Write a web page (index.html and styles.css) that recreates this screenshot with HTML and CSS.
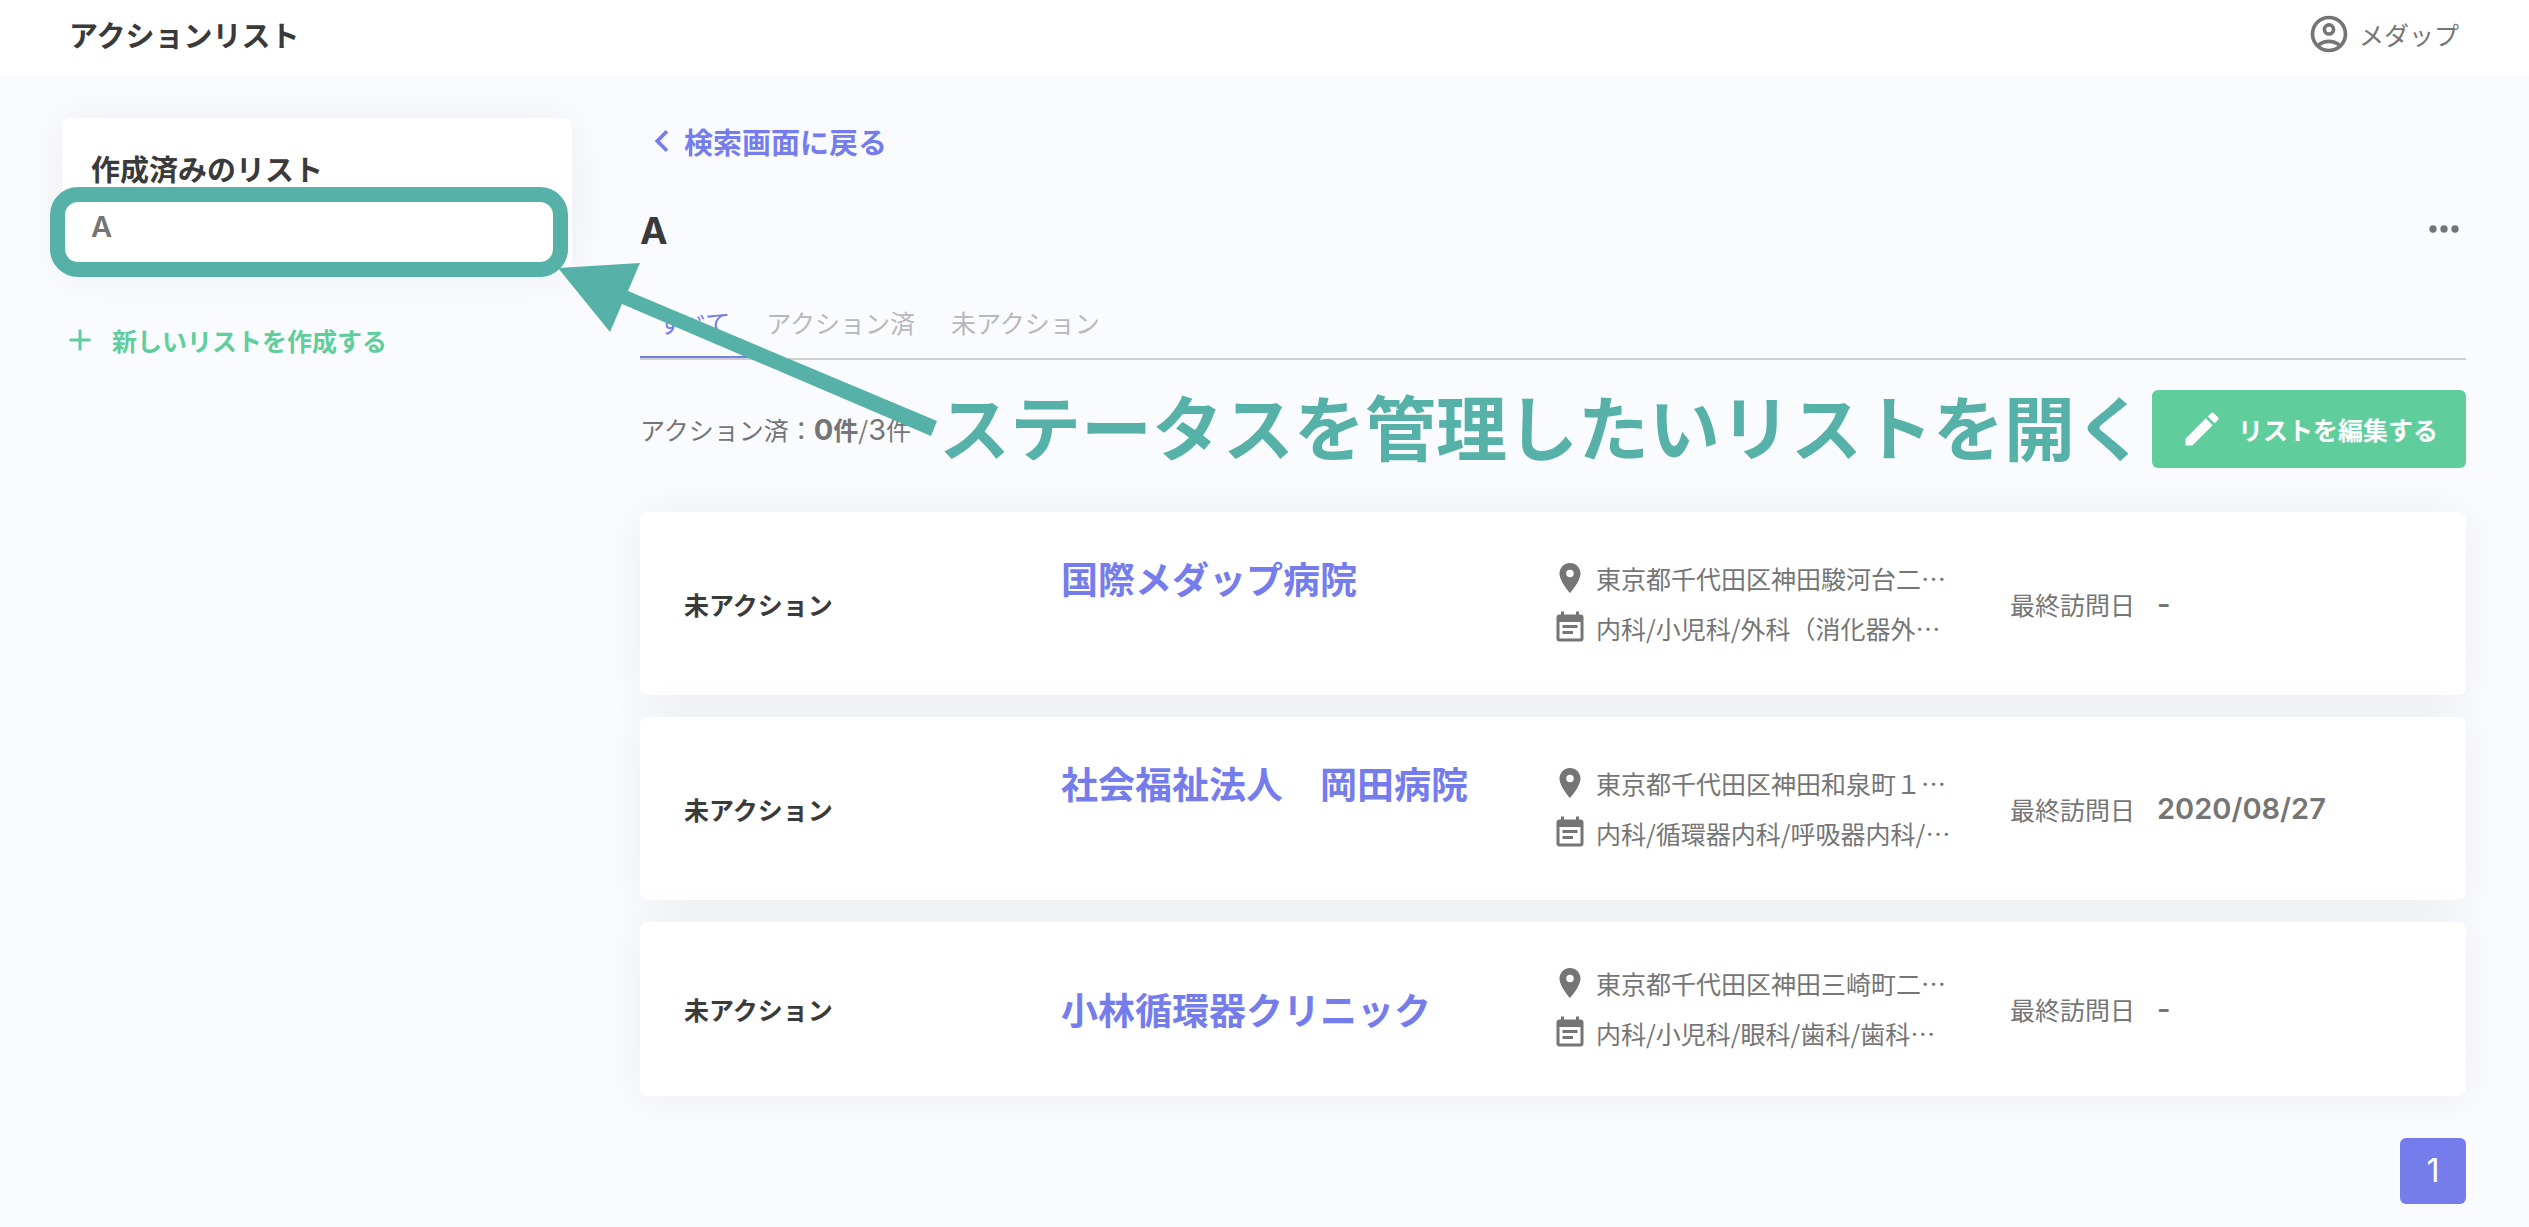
FILE: index.html
```
<!DOCTYPE html>
<html lang="ja">
<head>
  <meta charset="UTF-8">
  <meta name="viewport" content="width=device-width, initial-scale=1.0">
  <title>アクションリスト</title>
  <link rel="stylesheet" href="styles.css">
</head>
<body>

  <header class="header">
    <h1>アクションリスト</h1>
    <a href="#" class="account">
      <svg class="icon-lg" viewBox="0 0 24 24"><path fill-rule="evenodd" d="M12 2a10 10 0 1 0 0 20 10 10 0 0 0 0-20zM7.350 18.500C8.660 17.560 10.260 17 12 17s3.340.56 4.650 1.500A7.960 7.960 0 0 1 12 20c-1.740 0-3.340-.56-4.650-1.500zm10.790-1.380A9.950 9.950 0 0 0 12 15c-2.320 0-4.450.79-6.140 2.120A7.960 7.960 0 0 1 4 12c0-4.420 3.580-8 8-8s8 3.580 8 8c0 1.950-.7 3.730-1.860 5.120zM12 6a3.500 3.500 0 1 0 0 7 3.500 3.500 0 0 0 0-7zm0 5a1.500 1.500 0 1 1 0-3 1.500 1.500 0 0 1 0 3z"/></svg>
      <span>メダップ</span>
    </a>
  </header>

  <div class="page">
    <aside class="sidebar">
      <div class="list-box">
        <h2>作成済みのリスト</h2>
        <a href="#" class="list-item">A<span class="highlight"></span></a>
      </div>
      <a href="#" class="new-list">
        <svg class="icon" viewBox="0 0 24 24"><path d="M19 13h-6v6h-2v-6H5v-2h6V5h2v6h6v2z"/></svg>
        <span>新しいリストを作成する</span>
      </a>
    </aside>

    <main class="main">
      <a href="#" class="back">
        <svg class="icon-lg" viewBox="0 0 24 24"><path d="M15.410 7.410L14 6l-6 6 6 6 1.410-1.410L10.830 12z"/></svg>
        <span>検索画面に戻る</span>
      </a>

      <div class="title-row">
        <h2>A</h2>
        <button class="more" aria-label="メニュー">
          <svg class="icon-lg" viewBox="0 0 24 24"><path d="M6 10a2 2 0 1 0 0 4 2 2 0 0 0 0-4zm6 0a2 2 0 1 0 0 4 2 2 0 0 0 0-4zm6 0a2 2 0 1 0 0 4 2 2 0 0 0 0-4z"/></svg>
        </button>
      </div>

      <nav class="tabs">
        <a href="#" class="tab active">すべて</a>
        <a href="#" class="tab">アクション済</a>
        <a href="#" class="tab">未アクション</a>
      </nav>

      <div class="toolbar">
        <p class="count">アクション済：<b><span class="num">0</span>件</b>/<span class="num">3</span>件</p>
        <button class="edit">
          <svg class="icon-lg" viewBox="0 0 24 24"><path d="M3 17.250V21h3.750L17.810 9.940l-3.750-3.750L3 17.250zM20.710 7.040a1 1 0 0 0 0-1.410l-2.340-2.340a1 1 0 0 0-1.410 0l-1.830 1.830 3.750 3.750 1.830-1.830z"/></svg>
          <span>リストを編集する</span>
        </button>
        <div class="note">ステータスを管理したいリストを開く</div>
      </div>

      <div class="cards">
        <section class="card">
          <p class="status">未アクション</p>
          <a href="#" class="name name-tall">国際メダップ病院</a>
          <div class="details">
            <p><svg class="icon" viewBox="0 0 24 24"><path fill-rule="evenodd" d="M12 2C8.130 2 5 5.130 5 9c0 5.250 7 13 7 13s7-7.750 7-13c0-3.870-3.130-7-7-7zm0 9.500a2.500 2.500 0 1 1 0-5 2.500 2.500 0 0 1 0 5z"/></svg>東京都千代田区神田駿河台二…</p>
            <p><svg class="icon" viewBox="0 0 24 24"><path fill-rule="evenodd" d="M17 10H7v2h10v-2zm2-7h-1V1h-2v2H8V1H6v2H5a2 2 0 0 0-2 2v14a2 2 0 0 0 2 2h14a2 2 0 0 0 2-2V5a2 2 0 0 0-2-2zm0 16H5V8h14v11zm-5-5H7v2h7v-2z"/></svg>内科/小児科/外科（消化器外…</p>
          </div>
          <p class="visit">最終訪問日<b class="num">-</b></p>
        </section>

        <section class="card">
          <p class="status">未アクション</p>
          <a href="#" class="name name-tall">社会福祉法人　岡田病院</a>
          <div class="details">
            <p><svg class="icon" viewBox="0 0 24 24"><path fill-rule="evenodd" d="M12 2C8.130 2 5 5.130 5 9c0 5.250 7 13 7 13s7-7.750 7-13c0-3.870-3.130-7-7-7zm0 9.500a2.500 2.500 0 1 1 0-5 2.500 2.500 0 0 1 0 5z"/></svg>東京都千代田区神田和泉町１…</p>
            <p><svg class="icon" viewBox="0 0 24 24"><path fill-rule="evenodd" d="M17 10H7v2h10v-2zm2-7h-1V1h-2v2H8V1H6v2H5a2 2 0 0 0-2 2v14a2 2 0 0 0 2 2h14a2 2 0 0 0 2-2V5a2 2 0 0 0-2-2zm0 16H5V8h14v11zm-5-5H7v2h7v-2z"/></svg>内科/循環器内科/呼吸器内科/…</p>
          </div>
          <p class="visit">最終訪問日<b class="num">2020/08/27</b></p>
        </section>

        <section class="card">
          <p class="status">未アクション</p>
          <a href="#" class="name">小林循環器クリニック</a>
          <div class="details">
            <p><svg class="icon" viewBox="0 0 24 24"><path fill-rule="evenodd" d="M12 2C8.130 2 5 5.130 5 9c0 5.250 7 13 7 13s7-7.750 7-13c0-3.870-3.130-7-7-7zm0 9.500a2.500 2.500 0 1 1 0-5 2.500 2.500 0 0 1 0 5z"/></svg>東京都千代田区神田三崎町二…</p>
            <p><svg class="icon" viewBox="0 0 24 24"><path fill-rule="evenodd" d="M17 10H7v2h10v-2zm2-7h-1V1h-2v2H8V1H6v2H5a2 2 0 0 0-2 2v14a2 2 0 0 0 2 2h14a2 2 0 0 0 2-2V5a2 2 0 0 0-2-2zm0 16H5V8h14v11zm-5-5H7v2h7v-2z"/></svg>内科/小児科/眼科/歯科/歯科…</p>
          </div>
          <p class="visit">最終訪問日<b class="num">-</b></p>
        </section>
      </div>

      <nav class="pager">
        <a href="#">1</a>
      </nav>

      <!-- arrow from the note to the highlighted list -->
      <svg class="arrow" viewBox="0 0 379 174"><path d="M0 5L82 0 70 28 379 158 373 173 64 41 52 69z"/></svg>
    </main>
  </div>

</body>
</html>
```

FILE: styles.css
```
* {
  box-sizing: border-box;
}
body {
  margin: 0;
  background-color: #fafbff;
  color: #757575;
  font-family: "Noto Sans CJK JP", sans-serif;
  font-size: 25px;
  line-height: 40px;
}
h1, h2, p {
  margin: 0;
}
h1, h2 {
  color: #3a3a3a;
  font-size: 29px;
  font-weight: bold;
}
a {
  color: inherit;
  text-decoration: none;
}
button {
  padding: 0;
  border: none;
  background: none;
  color: inherit;
  font: inherit;
  cursor: pointer;
}
svg {
  display: block;
  flex: none;
  fill: currentColor;
}
.icon {
  width: 36px;
  height: 36px;
}
.icon-lg {
  width: 44px;
  height: 44px;
}
.num {
  font-family: Inter, sans-serif;
  font-size: 29px;
}
.header {
  position: relative;
  z-index: 1;
  display: flex;
  align-items: center;
  justify-content: space-between;
  height: 76px;
  padding: 0 70px 8px 69px;
  background-color: white;
}
.account {
  display: flex;
  align-items: flex-end;
  gap: 8px;
}
.account span {
  line-height: 44px;
}
.page {
  display: flex;
  gap: 68px;
  padding: 42px 63px 23px 62px;
}
.sidebar {
  flex: none;
  width: 510px;
}
.list-box {
  padding: 30px 0 26px;
  border-radius: 8px;
  background-color: white;
  box-shadow: 0 2px 50px rgba(0, 0, 0, 0.06);
}
.list-box h2 {
  padding: 0 29px;
}
.list-item {
  position: relative;
  display: block;
  margin-top: 19px;
  padding: 0 29px;
  font-family: Inter, sans-serif;
  font-size: 29px;
  font-weight: 600;
}
.highlight {
  position: absolute;
  top: -20px;
  right: 4px;
  left: -12px;
  height: 90px;
  border: 15px solid #56b2a8;
  border-radius: 28px;
}
.new-list {
  display: flex;
  align-items: center;
  gap: 14px;
  margin-top: 47px;
  color: #5fce9c;
  font-weight: bold;
}
.main {
  position: relative;
  flex: 1;
  min-width: 0;
}
.back {
  display: flex;
  align-items: center;
  height: 46px;
  color: #757ded;
  font-size: 29px;
  font-weight: bold;
}
.title-row {
  display: flex;
  align-items: flex-end;
  justify-content: space-between;
  height: 44px;
  margin-top: 43px;
}
.title-row h2 {
  font-family: Inter, sans-serif;
  font-size: 37px;
}
.tabs {
  display: flex;
  margin-top: 37px;
  border-bottom: 2px solid #cfcfd2;
}
.tab {
  padding: 0 18px;
  border-bottom: 2px solid transparent;
  color: #b8b8ba;
  line-height: 68px;
}
.tab.active {
  border-color: #757ded;
  color: #757ded;
}
.toolbar {
  position: relative;
  display: flex;
  align-items: center;
  justify-content: space-between;
  margin-top: 30px;
}
.edit {
  display: flex;
  align-items: center;
  gap: 14px;
  height: 78px;
  padding: 0 28px;
  border-radius: 6px;
  background-color: #5fce9c;
  color: white;
  font-weight: bold;
}
.note {
  position: absolute;
  top: -5px;
  left: 299px;
  color: #56b2a8;
  font-size: 71px;
  font-weight: bold;
  line-height: 78px;
  white-space: nowrap;
}
.arrow {
  position: absolute;
  top: 145px;
  left: -82px;
  width: 379px;
  height: 174px;
  fill: #56b2a8;
}
.cards {
  display: grid;
  gap: 22px;
  margin-top: 44px;
}
.card {
  display: grid;
  grid-template-columns: 377fr 491fr 458fr 412fr;
  align-items: center;
  padding: 36px 44px;
  border-radius: 8px;
  background-color: white;
  box-shadow: 0 2px 50px rgba(0, 0, 0, 0.06);
  white-space: nowrap;
}
.status {
  color: #3a3a3a;
  font-weight: bold;
}
.name {
  color: #757ded;
  font-size: 37px;
  font-weight: bold;
  line-height: 60px;
}
.name-tall {
  height: 111px;
}
.details {
  padding-bottom: 2px;
}
.details p {
  display: flex;
  align-items: center;
  gap: 8px;
  height: 50px;
}
.visit {
  display: flex;
  align-items: center;
  gap: 22px;
}
.visit .num {
  font-weight: 600;
}
.pager {
  display: flex;
  justify-content: flex-end;
  margin-top: 42px;
}
.pager a {
  width: 66px;
  border-radius: 6px;
  background-color: #757ded;
  color: white;
  font-family: Inter, sans-serif;
  font-size: 32px;
  line-height: 66px;
  text-align: center;
}
```
